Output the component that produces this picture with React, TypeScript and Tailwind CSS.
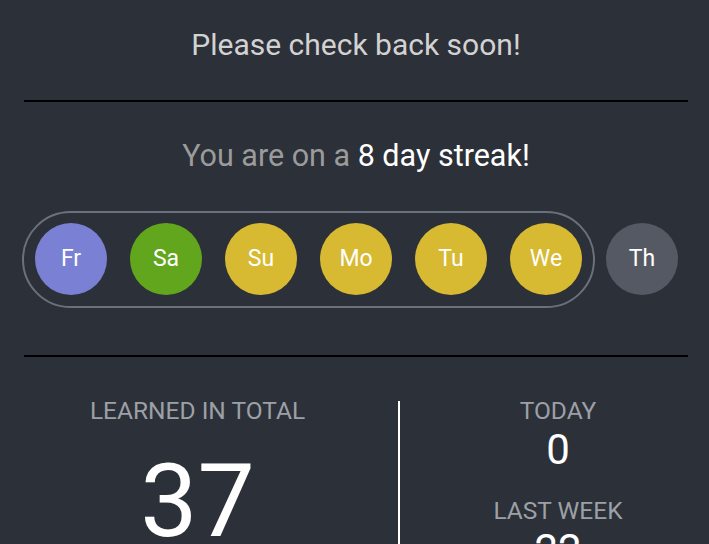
import React from "react";

interface Day {
  label: string;
  color: string;
}

const streakDays: Day[] = [
  { label: "Fr", color: "bg-[#7a80d3]" },
  { label: "Sa", color: "bg-[#62a61d]" },
  { label: "Su", color: "bg-[#d7b932]" },
  { label: "Mo", color: "bg-[#d7b932]" },
  { label: "Tu", color: "bg-[#d7b932]" },
  { label: "We", color: "bg-[#d7b932]" },
];

function DayCircle({ day }: { day: Day }) {
  return (
    <div
      className={`flex h-[72px] w-[72px] shrink-0 items-center justify-center rounded-full text-[23px] text-white ${day.color}`}
    >
      {day.label}
    </div>
  );
}

export default function App() {
  return (
    <div
      className="h-[544px] w-full overflow-hidden bg-[#2c3038] pl-6 pr-[21px]"
      style={{ fontFamily: "Roboto, 'Liberation Sans', sans-serif" }}
    >
      {/* Header */}
      <div className="pt-[30px] pb-[40px] text-center text-[30px] leading-none text-[#d2d2d2]">
        Please check back soon!
      </div>
      <div className="h-[2px] bg-black" />

      {/* Streak */}
      <div className="pt-[39px] text-center text-[30.5px] leading-none">
        <span className="text-[#9b9b9b]">You are on a </span>
        <span className="text-white">8 day streak!</span>
      </div>

      <div className="mt-[39px] flex items-center">
        <div className="-ml-[2px] flex items-center gap-[23px] rounded-full border-2 border-[#6b717c] px-[11px] py-[10.5px]">
          {streakDays.map((day) => (
            <DayCircle key={day.label} day={day} />
          ))}
        </div>
        <div className="ml-[11px] flex h-[72px] w-[72px] items-center justify-center rounded-full bg-[#555963] text-[23px] text-white">
          Th
        </div>
      </div>

      <div className="mt-[47px] h-[2px] bg-black" />

      {/* Stats */}
      <div className="flex pt-[42px]">
        <div className="flex w-[347px] flex-col items-center">
          <div className="text-[24.5px] uppercase leading-none text-[#9da0a6]">Learned in total</div>
          <div className="mt-[27px] text-[102px] leading-none text-white">37</div>
        </div>
        <div className="ml-[27px] mt-[2px] h-[200px] w-[2px] bg-white" />
        <div className="flex flex-1 flex-col items-center pl-[28px]">
          <div className="text-[24.5px] uppercase leading-none text-[#9da0a6]">Today</div>
          <div className="mt-[6px] text-[42px] leading-none text-white">0</div>
          <div className="mt-[28px] text-[24.5px] uppercase leading-none text-[#9da0a6]">Last week</div>
          <div className="mt-[5px] text-[42px] leading-none text-white">22</div>
        </div>
      </div>
    </div>
  );
}
